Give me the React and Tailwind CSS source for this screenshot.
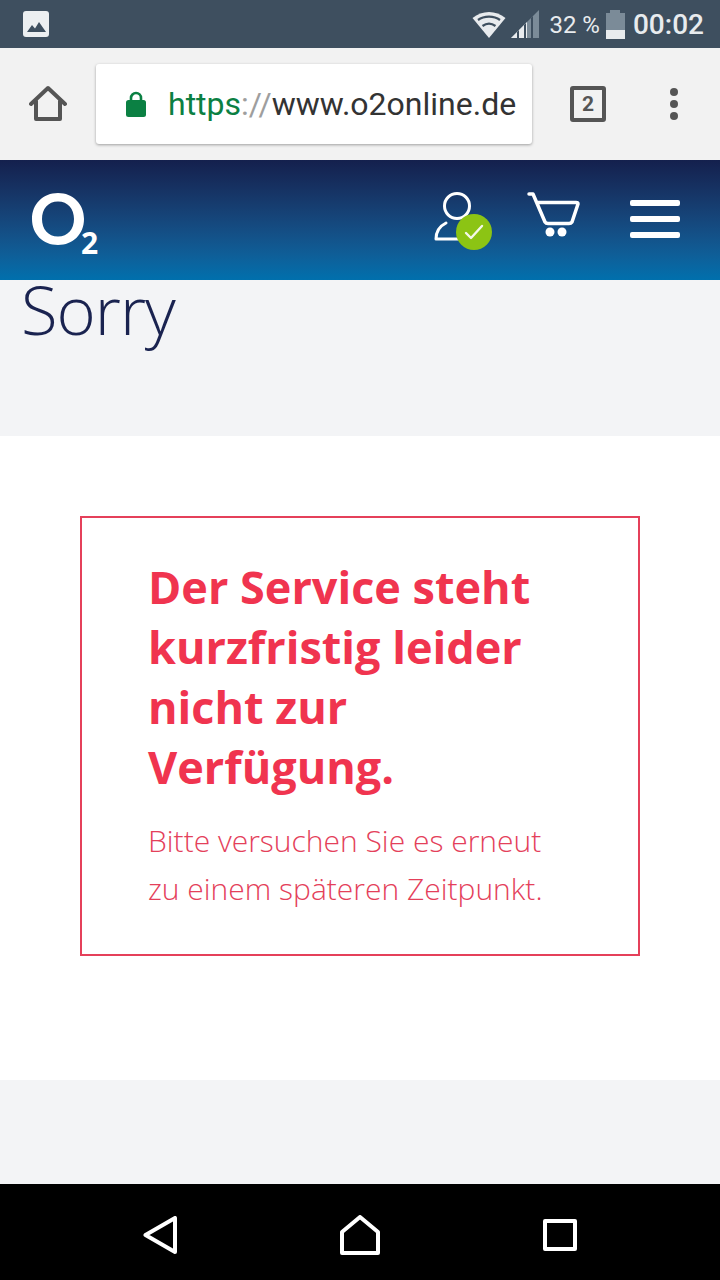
import React from 'react';

const sans = { fontFamily: '"Open Sans", sans-serif' };

const StatusBar = () => (
  <div className="h-12 bg-[#3e4f5f] flex items-center pl-[23px] pr-4 shrink-0">
    <svg width="26" height="26" viewBox="0 0 26 26">
      <rect width="26" height="26" rx="3" fill="#eceff1" />
      <path d="M4 21 L9 14 L12 17.5 L16 11 L23 21 Z" fill="#3e4f5f" />
    </svg>
    <div className="ml-auto flex items-center text-[#e8ebee]" style={{ fontFamily: 'Roboto, sans-serif' }}>
      <svg width="34" height="30" viewBox="0 0 34 30" className="mr-[5px]">
        <path d="M17 29 L0.5 9 C10 1 24 1 33.5 9 Z" fill="#e8ebee" />
        <path d="M6 11 C12 6.5 22 6.5 28 11" stroke="#3e4f5f" strokeWidth="2.2" fill="none" />
        <path d="M10.5 17 C14.5 14 19.5 14 23.5 17" stroke="#3e4f5f" strokeWidth="2.2" fill="none" />
      </svg>
      <svg width="28" height="28" viewBox="0 0 28 28" className="mr-[10px]">
        <path d="M0 28 L28 0 V28 Z" fill="#7b8b98" />
        <path d="M0 28 L16 12 V28 Z" fill="#e8ebee" />
        <path d="M6 22 V28 H8 V20 Z" fill="#3e4f5f" />
        <path d="M13 15 V28 H15 V13 Z" fill="#3e4f5f" />
        <path d="M20 8 V28 H22 V6 Z" fill="#3e4f5f" />
      </svg>
      <span className="text-[24px] leading-none mr-[6px] pt-[2px]">32 %</span>
      <div className="w-[19px] h-[29px] flex flex-col items-center mr-[8px]">
        <div className="w-[10px] h-[3px] bg-[#7b8b98]" />
        <div className="w-full flex-1 bg-[#7b8b98]" />
        <div className="w-full h-[9px] bg-[#e8ebee]" />
      </div>
      <span className="text-[28px] leading-none font-medium pt-[2px]">00:02</span>
    </div>
  </div>
);

const BrowserBar = () => (
  <div className="h-[112px] bg-[#f2f2f2] flex items-center shrink-0">
    <div className="w-24 flex justify-center">
      <svg width="38" height="38" viewBox="0 0 38 38" fill="none" stroke="#555" strokeWidth="4" strokeLinejoin="round" strokeLinecap="round">
        <path d="M2 19 L19 3 L36 19 M7 16 V34 H31 V16" />
      </svg>
    </div>
    <div className="w-[436px] h-20 bg-white rounded-[3px] shadow-[0_1px_3px_rgba(0,0,0,0.35)] flex items-center pl-[30px]">
      <svg width="20" height="26" viewBox="0 0 20 26" className="shrink-0">
        <path d="M5 11 V7 a5 5 0 0 1 10 0 V11" fill="none" stroke="#0b8043" strokeWidth="2.6" />
        <rect y="9" width="20" height="17" rx="2.5" fill="#0b8043" />
      </svg>
      <div className="ml-[22px] text-[32px] leading-none whitespace-nowrap" style={{ fontFamily: 'Roboto, sans-serif' }}>
        <span className="text-[#0b8043]">https</span>
        <span className="text-[#9e9e9e]">://</span>
        <span className="text-[#333]">www.o2online.de</span>
      </div>
    </div>
    <div className="ml-[38px] w-9 h-9 border-[4px] border-[#555] rounded-[3px] flex items-center justify-center text-[#555] text-[21px] font-bold leading-none" style={{ fontFamily: 'Roboto, sans-serif' }}>
      2
    </div>
    <div className="ml-[64px] flex flex-col gap-[4px]">
      <div className="w-2 h-2 rounded-full bg-[#555]" />
      <div className="w-2 h-2 rounded-full bg-[#555]" />
      <div className="w-2 h-2 rounded-full bg-[#555]" />
    </div>
  </div>
);

const SiteHeader = () => (
  <div className="h-[120px] bg-gradient-to-b from-[#14204d] to-[#0070ad] flex items-start shrink-0 relative">
    {/* O2 logo */}
    <div className="ml-[31px] mt-[32px] flex items-start">
      <svg width="54" height="54" viewBox="0 0 54 54">
        <path
          fillRule="evenodd"
          fill="#fff"
          d="M27 1 C42 1 53 12 53 27 C53 42 42 53 27 53 C12 53 1 42 1 27 C1 12 12 1 27 1 Z M27 9.5 C17 9.5 11 17 11 27 C11 37 17 44.5 27 44.5 C37 44.5 43 37 43 27 C43 17 37 9.5 27 9.5 Z"
        />
      </svg>
      <span className="-ml-[4px] mt-[36px] text-[30px] leading-none font-bold text-white">2</span>
    </div>
    <div className="ml-auto flex items-start">
      <div className="relative w-[60px] h-[62px] mt-[30px]">
        <svg width="60" height="62" viewBox="0 0 60 62" fill="none" stroke="#fff" strokeWidth="3" strokeLinecap="round" strokeLinejoin="round">
          <circle cx="25" cy="16" r="12.5" />
          <path d="M14 33 C8 36 4 42 4 49 H28" />
        </svg>
        <div className="absolute left-[24px] top-[24px] w-9 h-9 rounded-full bg-[#8cc414] flex items-center justify-center">
          <svg width="20" height="16" viewBox="0 0 20 16" fill="none" stroke="#f4f8e8" strokeWidth="2.4" strokeLinecap="round" strokeLinejoin="round">
            <path d="M2 9 L7 14 L18 2" />
          </svg>
        </div>
      </div>
      <svg width="54" height="50" viewBox="0 0 54 50" className="ml-[34px] mt-[32px]" fill="none" stroke="#fff" strokeWidth="3.5" strokeLinecap="round" strokeLinejoin="round">
        <path d="M3 2 H7 L19 30 Q20 31.5 22 31.5 H43 Q45 31.5 46 30 L52 12 Q52 10.5 50 10.5 H11" />
        <circle cx="24" cy="40" r="4.5" fill="#fff" stroke="none" />
        <circle cx="36" cy="40" r="4.5" fill="#fff" stroke="none" />
      </svg>
      <div className="ml-[50px] mr-10 mt-[40px] w-[50px] flex flex-col gap-[10px]">
        <div className="h-[6px] rounded-[2px] bg-white" />
        <div className="h-[6px] rounded-[2px] bg-white" />
        <div className="h-[6px] rounded-[2px] bg-white" />
      </div>
    </div>
  </div>
);

const NavBar = () => (
  <div className="h-24 bg-black flex items-center justify-center shrink-0 pt-[6px]">
    <div className="w-full flex justify-between pl-[143px] pr-[143px] items-center">
      <svg width="34" height="38" viewBox="0 0 34 38" fill="none" stroke="#fff" strokeWidth="4" strokeLinejoin="round">
        <path d="M2.5 19 L32 2 V36 Z" />
      </svg>
      <svg width="40" height="40" viewBox="0 0 40 40" fill="none" stroke="#fff" strokeWidth="4" strokeLinejoin="round">
        <path d="M2 17 L20 2 L38 17 V38 H2 Z" />
      </svg>
      <div className="w-[34px] h-8 border-[4px] border-white rounded-[2px]" />
    </div>
  </div>
);

export default function App() {
  return (
    <div className="w-[720px] h-[1280px] flex flex-col overflow-hidden" style={sans}>
      <StatusBar />
      <BrowserBar />
      <SiteHeader />

      <div className="h-[156px] bg-[#f3f4f6] pl-[21px] shrink-0">
        <h1 className="text-[67px] leading-[58px] text-[#1a2350] font-light tracking-[-1px]">Sorry</h1>
      </div>

      <div className="h-[644px] bg-white pt-20 px-20 shrink-0">
        <div className="h-110 border-2 border-[#e5405a] pl-[66px] pr-4 pt-[39px]">
          <h2 className="text-[45px] leading-[60px] font-bold text-[#f0344f]">
            Der Service steht<br />kurzfristig leider<br />nicht zur<br />Verfügung.
          </h2>
          <p className="mt-5 text-[30px] leading-[48px] font-light text-[#e4405a]">
            Bitte versuchen Sie es erneut<br />zu einem späteren Zeitpunkt.
          </p>
        </div>
      </div>

      <div className="flex-1 bg-[#f3f4f6]" />
      <NavBar />
    </div>
  );
}
